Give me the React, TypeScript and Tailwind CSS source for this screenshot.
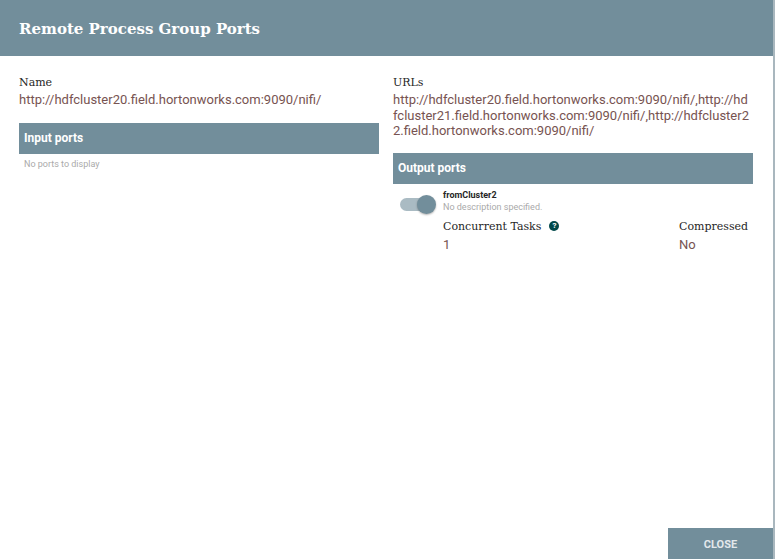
import React from "react";

const slab = { fontFamily: '"DejaVu Serif", serif' };
const roboto = { fontFamily: 'Roboto, "Liberation Sans", sans-serif' };

function PortHeader({ title }: { title: string }) {
  return (
    <div className="h-[31px] bg-[#728e9b] flex items-center pl-[5px] text-white text-[12px] font-bold" style={roboto}>
      {title}
    </div>
  );
}

export default function App() {
  return (
    <div className="w-[775px] h-[559px] bg-white relative overflow-hidden" style={roboto}>
      <div className="w-[775px] h-[559px] border-r-2 border-[#a9b7be] flex flex-col">
        <div className="h-[56px] bg-[#728e9b] flex items-center px-[19px] shrink-0">
          <div className="text-white text-[15px] font-bold pt-[2px]" style={slab}>
            Remote Process Group Ports
          </div>
        </div>
        <div className="flex flex-1 pt-[19px] pl-[19px]">
          <div className="w-[360px]">
            <div className="text-[11px] text-[#262626] leading-[15px]" style={slab}>Name</div>
            <div className="text-[13px] text-[#775351] leading-[15.5px] mt-[2px]" style={roboto}>
              http://hdfcluster20.field.hortonworks.com:9090/nifi/
            </div>
            <div className="mt-[15px]">
              <PortHeader title="Input ports" />
              <div className="text-[9px] text-[#aaaaaa] pl-[5px] pt-[4px]" style={roboto}>No ports to display</div>
            </div>
          </div>
          <div className="w-[360px] ml-[14px]">
            <div className="text-[11px] text-[#262626] leading-[15px]" style={slab}>URLs</div>
            <div className="w-[356px] text-[13px] text-[#775351] leading-[15.5px] mt-[2px] break-all" style={roboto}>
              http://hdfcluster20.field.hortonworks.com:9090/nifi/,http://hdfcluster21.field.hortonworks.com:9090/nifi/,http://hdfcluster22.field.hortonworks.com:9090/nifi/
            </div>
            <div className="mt-[14px]">
              <PortHeader title="Output ports" />
              <div className="flex pt-[5px]">
                <div className="w-[50px] shrink-0 pl-[7px] pt-[6px]">
                  <div className="relative w-[36px] h-[18px]">
                    <div className="absolute left-0 top-[3px] w-[30px] h-[13px] rounded-full bg-[#aabbc3]" />
                    <div className="absolute left-[17px] top-0 w-[19px] h-[19px] rounded-full bg-[#728e9b] shadow-[0_1px_2px_rgba(0,0,0,0.3)]" />
                  </div>
                </div>
                <div className="flex-1">
                  <div className="text-[9px] font-bold text-[#262626] leading-[12px]">fromCluster2</div>
                  <div className="text-[9px] text-[#aaaaaa] leading-[12px]">No description specified.</div>
                  <div className="flex mt-[6px]">
                    <div className="flex-1">
                      <div className="flex items-center gap-[8px]">
                        <span className="text-[11px] text-[#262626] leading-[15px]" style={slab}>Concurrent Tasks</span>
                        <span className="w-[10px] h-[10px] rounded-full bg-[#004849] text-white text-[8px] font-bold flex items-center justify-center leading-none">?</span>
                      </div>
                      <div className="text-[13px] text-[#775351] leading-[15px] mt-[3px]">1</div>
                    </div>
                    <div className="w-[74px]">
                      <div className="text-[11px] text-[#262626] leading-[15px]" style={slab}>Compressed</div>
                      <div className="text-[13px] text-[#775351] leading-[15px] mt-[3px]">No</div>
                    </div>
                  </div>
                </div>
              </div>
            </div>
          </div>
        </div>
        <div className="flex justify-end shrink-0">
          <div className="w-[105px] h-[31px] bg-[#728e9b] flex items-center justify-center pt-[3px] text-[11px] font-bold text-[#e3e8eb]">
            CLOSE
          </div>
        </div>
      </div>
    </div>
  );
}
